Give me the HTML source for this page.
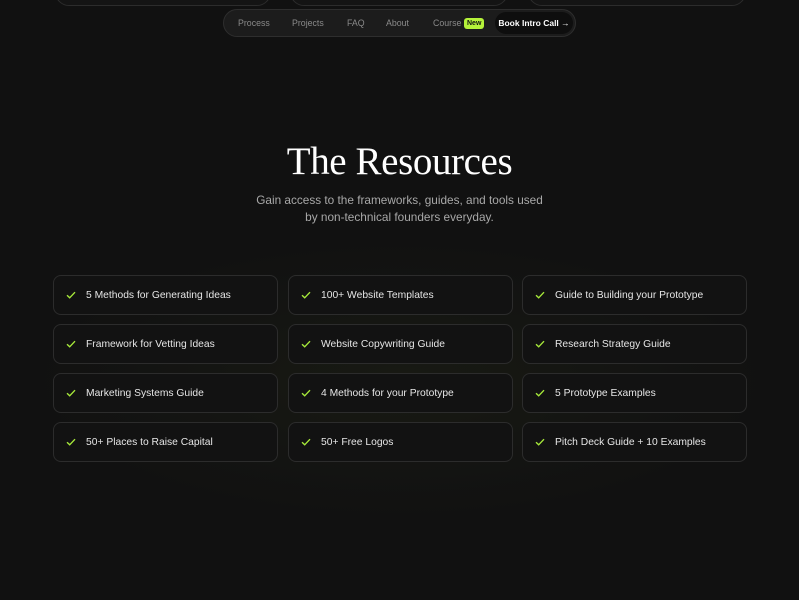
<!DOCTYPE html>
<html><head><style>
*{margin:0;padding:0;box-sizing:border-box}
body{width:799px;height:600px;overflow:hidden;background:#111111;font-family:"Liberation Sans",sans-serif;position:relative}
.glow{position:absolute;left:0;top:230px;width:799px;height:300px;background:radial-gradient(ellipse at center,rgba(60,70,30,0.16),rgba(17,17,17,0) 65%)}
.top{position:absolute;top:-30px;height:36px;border:1px solid #2c2c2c;border-radius:0 0 14px 14px;background:#141414}
.nav{position:absolute;left:223px;top:9px;width:353px;height:28px;border:1px solid #2e2e2e;border-radius:14px;background:#1c1c1c;font-size:8.8px;color:#8a8a8a}
.nav span{position:absolute;top:8px}
.new{background:#b5f23a;color:#111;border-radius:3px;padding:1px 3px;font-size:7px;font-weight:bold;top:8px!important;line-height:9px}
.book{position:absolute;left:271px;top:2px;width:78px;height:22px;border-radius:11px;background:#0e0e0e;color:#fff;font-size:8.5px;font-weight:bold;text-align:center;line-height:22px}
h1{position:absolute;top:139px;width:100%;text-align:center;font-family:"Liberation Serif",serif;font-weight:normal;font-size:39px;color:#fff;letter-spacing:-0.4px}
.sub{position:absolute;top:192px;width:100%;text-align:center;font-size:11.8px;line-height:17px;color:#a8a8a8}
.card{position:absolute;width:225px;height:40px;border:1px solid #2c2c2c;border-radius:8px;background:#121212;color:#e6e6e6;font-size:10.3px;line-height:39px;padding-left:32px}
.card svg{position:absolute;left:12px;top:15px}
</style></head><body>
<div class="glow"></div>
<div class="top" style="left:55px;width:216px"></div>
<div class="top" style="left:290px;width:218px"></div>
<div class="top" style="left:528px;width:218px"></div>
<div class="nav">
<span style="left:14px">Process</span>
<span style="left:68px">Projects</span>
<span style="left:123px">FAQ</span>
<span style="left:162px">About</span>
<span style="left:209px">Course</span>
<span class="new" style="left:240px">New</span>
<div class="book">Book Intro Call →</div>
</div>
<h1>The Resources</h1>
<div class="sub">Gain access to the frameworks, guides, and tools used<br>by non-technical founders everyday.</div>
<div id="c"></div>
<script>
const items=[["5 Methods for Generating Ideas","100+ Website Templates","Guide to Building your Prototype"],["Framework for Vetting Ideas","Website Copywriting Guide","Research Strategy Guide"],["Marketing Systems Guide","4 Methods for your Prototype","5 Prototype Examples"],["50+ Places to Raise Capital","50+ Free Logos","Pitch Deck Guide + 10 Examples"]];
const xs=[53,288,522],ys=[275,324,373,422];let h="";
items.forEach((r,i)=>r.forEach((t,j)=>{h+=`<div class="card" style="left:${xs[j]}px;top:${ys[i]}px"><svg width="10" height="8" viewBox="0 0 10 8"><path d="M1 4.2L3.7 6.8L9 1.2" stroke="#a6e83a" stroke-width="1.4" fill="none"/></svg>${t}</div>`}));
document.getElementById("c").innerHTML=h;
</script>
</body></html>
